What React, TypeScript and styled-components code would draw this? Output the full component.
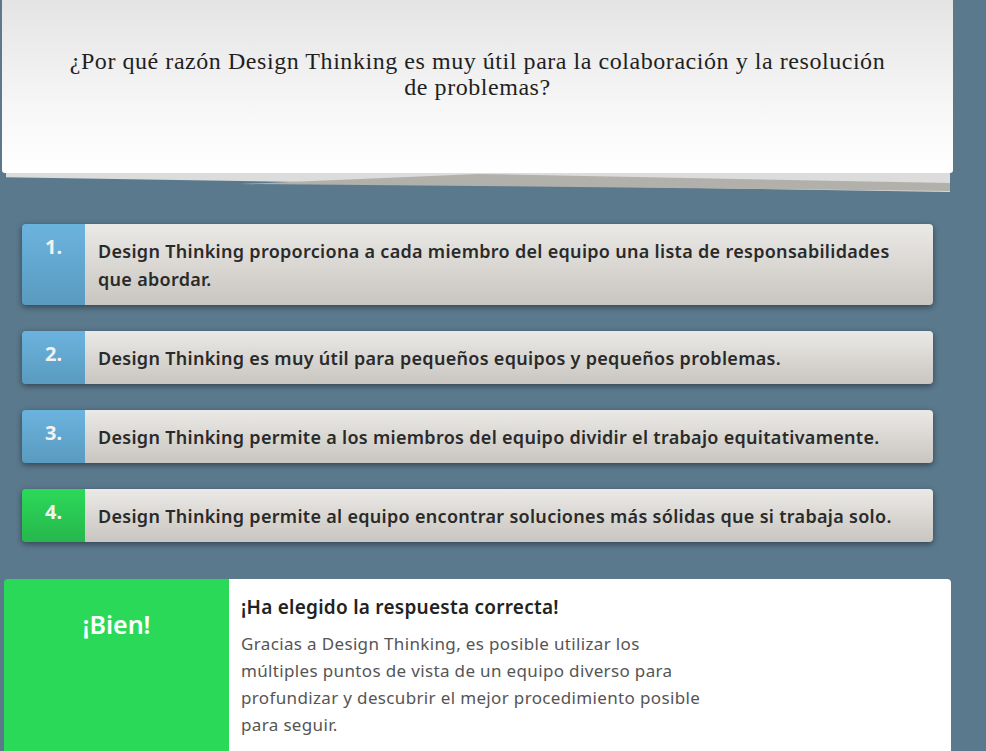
import React from 'react'
import styled, { createGlobalStyle, css } from 'styled-components'

const GlobalStyle = createGlobalStyle`
  html, body {
    margin: 0;
    padding: 0;
    background: #5b798d;
    font-family: 'Noto Sans', 'Open Sans', sans-serif;
    overflow: hidden;
  }
`

const Page = styled.div`
  width: 986px;
  height: 751px;
  display: flex;
  flex-direction: column;
`

const QuestionWrap = styled.div`
  position: relative;
  margin-left: 2px;
  width: 951px;
  height: 173px;
  margin-bottom: 51px;

  &::before {
    content: '';
    position: absolute;
    left: 4px;
    right: 3px;
    top: 8px;
    bottom: -19px;
    background: #dcdcdc;
    clip-path: polygon(0 0, 100% 0, 100% 100%, 0 92%);
  }

  &::after {
    content: '';
    position: absolute;
    left: 0;
    top: 0;
    width: 100%;
    height: 192px;
    background: #b2b0aa;
    clip-path: polygon(238px 184px, 476px 174px, 948px 183px, 948px 191px, 476px 186px);
  }
`

const QuestionCard = styled.div`
  position: relative;
  z-index: 1;
  height: 100%;
  box-sizing: border-box;
  padding: 48px 60px 0;
  background: linear-gradient(to bottom, #e4e4e4 0%, #f6f6f6 60%, #ffffff 100%);
  border-radius: 0 0 3px 3px;
  text-align: center;
`

const QuestionText = styled.h1`
  margin: 0;
  font-family: 'Liberation Serif', 'DejaVu Serif', serif;
  font-weight: 400;
  font-size: 24px;
  letter-spacing: 0.55px;
  line-height: 26px;
  color: #1f1f1f;
`

const Options = styled.div`
  display: flex;
  flex-direction: column;
  gap: 26px;
  padding-left: 22px;
  width: 911px;
  margin-bottom: 37px;
`

const Option = styled.div`
  display: flex;
  border-radius: 4px;
  overflow: hidden;
  box-shadow: 0 2px 6px rgba(0, 0, 0, 0.45);
`

const NumberCell = styled.div<{ $correct?: boolean }>`
  flex: 0 0 63px;
  text-align: center;
  padding-top: 10px;
  font-weight: 700;
  font-size: 20px;
  line-height: 26px;
  color: #f2f2f2;
  ${({ $correct }) =>
    $correct
      ? css`background: linear-gradient(to bottom, #2bd958, #27b74d);`
      : css`background: linear-gradient(to bottom, #6bb3df, #5a9bbf);`}
`

const OptionText = styled.div`
  flex: 1;
  padding: 13px 30px 12px 13px;
  font-weight: 600;
  font-size: 18px;
  letter-spacing: 0.3px;
  line-height: 28px;
  color: #2a2a2a;
  background: linear-gradient(to bottom, #ebe9e6, #c9c6c1);
`

const Feedback = styled.div`
  display: flex;
  margin-left: 4px;
  width: 947px;
  flex: 1;
  border-radius: 4px 4px 0 0;
  overflow: hidden;
`

const Verdict = styled.div`
  flex: 0 0 225px;
  background: #2bd958;
  color: #ffffff;
  text-align: center;
  font-weight: 600;
  font-size: 25px;
  padding-top: 28px;
`

const Explanation = styled.div`
  flex: 1;
  background: #ffffff;
  padding: 14px 12px 0;
`

const ExplanationTitle = styled.h2`
  margin: 0 0 9px;
  font-weight: 600;
  font-size: 19px;
  letter-spacing: 0.25px;
  line-height: 28px;
  color: #222222;
`

const ExplanationBody = styled.p`
  margin: 0;
  width: 470px;
  font-size: 17px;
  letter-spacing: 0.35px;
  line-height: 27px;
  color: #555555;
`

const answers = [
  'Design Thinking proporciona a cada miembro del equipo una lista de responsabilidades que abordar.',
  'Design Thinking es muy útil para pequeños equipos y pequeños problemas.',
  'Design Thinking permite a los miembros del equipo dividir el trabajo equitativamente.',
  'Design Thinking permite al equipo encontrar soluciones más sólidas que si trabaja solo.',
]

const CORRECT = 3

const App = () => (
  <Page>
    <GlobalStyle />
    <QuestionWrap>
      <QuestionCard>
        <QuestionText>
          ¿Por qué razón Design Thinking es muy útil para la colaboración y la resolución de problemas?
        </QuestionText>
      </QuestionCard>
    </QuestionWrap>
    <Options>
      {answers.map((text, i) => (
        <Option key={i}>
          <NumberCell $correct={i === CORRECT}>{i + 1}.</NumberCell>
          <OptionText>{text}</OptionText>
        </Option>
      ))}
    </Options>
    <Feedback>
      <Verdict>¡Bien!</Verdict>
      <Explanation>
        <ExplanationTitle>¡Ha elegido la respuesta correcta!</ExplanationTitle>
        <ExplanationBody>
          Gracias a Design Thinking, es posible utilizar los múltiples puntos de vista de un equipo diverso para
          profundizar y descubrir el mejor procedimiento posible para seguir.
        </ExplanationBody>
      </Explanation>
    </Feedback>
  </Page>
)

export default App
